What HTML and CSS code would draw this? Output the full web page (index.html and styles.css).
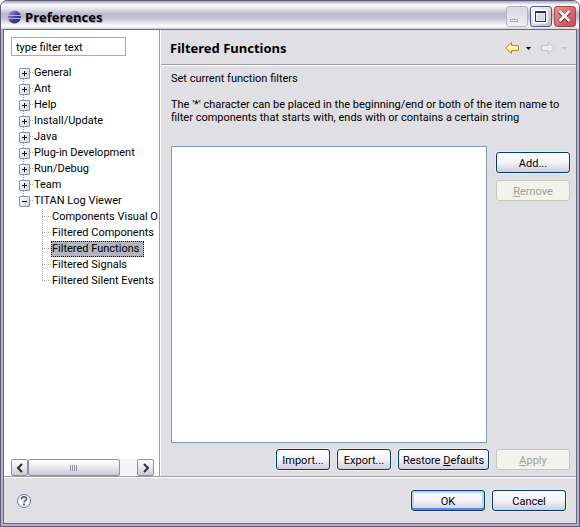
FILE: index.html
```html
<!DOCTYPE html>
<html lang="en">
<head>
<meta charset="utf-8">
<title>Preferences</title>
<link rel="stylesheet" href="styles.css">
</head>
<body>
<div class="window">
  <header class="titlebar">
    <svg class="app-icon" width="16" height="16" viewBox="0 0 16 16" aria-hidden="true">
      <defs><linearGradient id="orb" x1="0" y1="0" x2="1" y2="1"><stop offset="0" stop-color="#c8a4dc"/><stop offset=".5" stop-color="#4c449f"/><stop offset="1" stop-color="#25206c"/></linearGradient></defs>
      <circle cx="6.500" cy="8" r="6" fill="#e4a8d0"/>
      <circle cx="8.500" cy="8" r="6.500" fill="url(#orb)"/>
      <path d="M1 6.500h14M1 9.500h14" stroke="#b4b4e8" stroke-width="1"/>
    </svg>
    <h1 class="window-title">Preferences</h1>
    <div class="window-controls">
      <button class="wc wc-min" aria-label="Minimize"><svg width="21" height="21" viewBox="0 0 21 21"><rect x="4.500" y="13.500" width="7" height="2" fill="#fff" stroke="#aaa8b8"/></svg></button>
      <button class="wc wc-max" aria-label="Maximize"><svg width="21" height="21" viewBox="0 0 21 21"><path d="M5 5h11v11H5z" fill="none" stroke="#fff" stroke-width="3"/><path d="M5.500 6v9.500h10V6" fill="none" stroke="#30344c"/><path d="M5 6h11" stroke="#30344c" stroke-width="2"/></svg></button>
      <button class="wc wc-close" aria-label="Close"><svg width="21" height="21" viewBox="0 0 21 21"><path d="M5.500 5.500l10 10M15.500 5.500l-10 10" stroke="#802830" stroke-width="4"/><path d="M5.500 5l10 10M15.500 5l-10 10" stroke="#fff" stroke-width="2.500"/></svg></button>
    </div>
  </header>
  <div class="client">
    <main class="panes">
      <nav class="sidebar" aria-label="Preference pages">
        <input class="filter" type="text" value="type filter text" aria-label="Filter text">
        <ul class="tree">
          <li><span class="node">General</span></li>
          <li><span class="node">Ant</span></li>
          <li><span class="node">Help</span></li>
          <li><span class="node">Install/Update</span></li>
          <li><span class="node">Java</span></li>
          <li><span class="node">Plug-in Development</span></li>
          <li><span class="node">Run/Debug</span></li>
          <li><span class="node">Team</span></li>
          <li><span class="node open">TITAN Log Viewer</span>
            <ul class="subtree">
              <li><span class="leaf">Components Visual O</span></li>
              <li><span class="leaf">Filtered Components</span></li>
              <li><span class="leaf selected">Filtered Functions</span></li>
              <li><span class="leaf">Filtered Signals</span></li>
              <li><span class="leaf">Filtered Silent Events</span></li>
            </ul>
          </li>
        </ul>
        <div class="scrollbar">
          <button class="sb-button" aria-label="Scroll left"><svg width="14" height="14" viewBox="0 0 14 14"><path d="M9 3L5 7l4 4" fill="none" stroke="#303030" stroke-width="2"/></svg></button>
          <div class="sb-track"><div class="sb-thumb"><span class="grip"></span></div></div>
          <button class="sb-button" aria-label="Scroll right"><svg width="14" height="14" viewBox="0 0 14 14"><path d="M5 3l4 4-4 4" fill="none" stroke="#303030" stroke-width="2"/></svg></button>
        </div>
      </nav>
      <section class="page">
        <div class="page-header">
          <h2 class="page-title">Filtered Functions</h2>
          <div class="history">
            <button class="nav-button" aria-label="Back"><svg width="16" height="14" viewBox="0 0 16 14"><path d="M1.500 7L7.500 1.500V4.500H14.500V9.500H7.500V12.500Z" fill="#fff0a8" stroke="#c08820"/></svg></button>
            <button class="nav-button" aria-label="Back history"><svg width="5" height="3" viewBox="0 0 5 3"><path d="M0 0h5L2.500 3z" fill="#000"/></svg></button>
            <button class="nav-button forward" aria-label="Forward" disabled><svg width="16" height="14" viewBox="0 0 16 14"><path d="M14.500 7L8.500 1.500V4.500H1.500V9.500H8.500V12.500Z" fill="#eeeeee" stroke="#c4c4c4"/></svg></button>
            <button class="nav-button" aria-label="Forward history" disabled><svg width="5" height="3" viewBox="0 0 5 3"><path d="M0 0h5L2.500 3z" fill="#c4c4bc"/></svg></button>
          </div>
        </div>
        <div class="page-body">
          <p class="intro">Set current function filters</p>
          <p class="hint">The '*' character can be placed in the beginning/end or both of the item name to<br>filter components that starts with, ends with or contains a certain string</p>
          <div class="filters">
            <div class="list" role="listbox" aria-label="Function filters"></div>
            <div class="list-actions">
              <button class="button">Add...</button>
              <button class="button" disabled><u>R</u>emove</button>
            </div>
          </div>
          <div class="page-actions">
            <button class="button small">Import...</button>
            <button class="button small">Export...</button>
            <button class="button wide">Restore <u>D</u>efaults</button>
            <button class="button" disabled><u>A</u>pply</button>
          </div>
        </div>
      </section>
    </main>
    <footer class="footer">
      <button class="help" aria-label="Help"><svg width="16" height="16" viewBox="0 0 16 16"><circle cx="8" cy="8" r="6.500" fill="#f6f8fc" stroke="#62789c"/><path d="M5.500 6.500c0-3.500 5-3.500 5-.500 0 1.700-2.500 1.600-2.500 3.500M8 10.500v2" fill="none" stroke="#40587f" stroke-width="1.600"/></svg></button>
      <button class="button default">OK</button>
      <button class="button">Cancel</button>
    </footer>
  </div>
</div>
</body>
</html>
```
FILE: styles.css
```css
* { box-sizing: border-box; }
body {
  margin: 0;
  background: #fff;
  color: #000;
  font: 11px/13px Roboto, Tahoma, sans-serif;
}
button, input { font: inherit; color: inherit; }
h1, h2, p, ul { margin: 0; padding: 0; }
ul { list-style: none; }
svg { display: block; }

.window {
  display: flex;
  flex-direction: column;
  min-height: 100vh;
  padding: 0 2px 2px;
  border: 1px solid #5c5a78;
  border-radius: 7px 7px 0 0;
  background: #b4b2c8;
}
.titlebar {
  display: flex;
  align-items: center;
  gap: 3px;
  height: 28px;
  margin: 0 -2px;
  padding: 3px 3px 0 5px;
  border-radius: 6px 6px 0 0;
  background: linear-gradient(#a5a3b8, #fff 4px, #e4e3ec 8px, #bbb9cc 13px, #c2c0d2 17px, #fff 25px, #d0cfdc);
}
.window-title {
  flex: 1;
  font: bold 13px/18px "Open Sans", sans-serif;
  text-shadow: 1px 1px #a9a8b8;
}
.window-controls { display: flex; gap: 2px; }
.wc {
  width: 22px;
  height: 21px;
  padding: 0;
  border: 1px solid #565a80;
  border-radius: 3px;
  background: linear-gradient(135deg, #fff, #b8b7cc);
}
.wc svg { margin: -1px; }
.wc-min { border-color: #b4b3c6; background: linear-gradient(#d8d7e2, #eeedf4); }
.wc-close { border-color: #a34850; background: linear-gradient(135deg, #e89090, #c84850); }

.client {
  flex: 1;
  display: flex;
  flex-direction: column;
  border: 1px solid #6a6888;
  background: #e0dfe3;
}
.panes { flex: 1; display: flex; border-bottom: 1px solid #9d9da1; }

.sidebar {
  display: flex;
  flex-direction: column;
  flex: 0 0 156px;
  min-width: 0;
  padding: 7px 0 0 7px;
  border-right: 1px solid #9d9da1;
  background: #fff;
}
.filter {
  width: 115px;
  height: 19px;
  padding: 1px 4px 0;
  border: 1px solid #a5acb2;
  border-radius: 0;
  background: #fff;
}
.tree { flex: 1; padding: 9px 0 0 8px; overflow: hidden; }
.tree li { line-height: 16px; white-space: nowrap; }
.node { display: block; position: relative; padding-left: 15px; }
.node::before {
  content: "";
  position: absolute;
  left: 0;
  top: 3px;
  width: 9px;
  height: 9px;
  border: 1px solid #7898b5;
  border-radius: 1px;
  background:
    linear-gradient(#000, #000) center / 5px 1px no-repeat,
    linear-gradient(#000, #000) center / 1px 5px no-repeat,
    linear-gradient(135deg, #fff, #d2d0dc);
}
.node.open::before {
  background:
    linear-gradient(#000, #000) center / 5px 1px no-repeat,
    linear-gradient(135deg, #fff, #d2d0dc);
}
.node::after {
  content: "";
  position: absolute;
  left: 10px;
  top: 7px;
  width: 4px;
  border-top: 1px dotted #a5a294;
}
.tree > li { background: repeating-linear-gradient(#a5a294 0 1px, transparent 1px 2px) 4px 0 / 1px 100% no-repeat; }
.tree > li:first-child { background-position: 4px 8px; }
.tree > li:last-child { background-size: 1px 8px; }
.subtree { padding-left: 23px; }
.subtree li {
  background:
    repeating-linear-gradient(#aca899 0 1px, transparent 1px 2px) 0 0 / 1px 100% no-repeat,
    repeating-linear-gradient(90deg, #aca899 0 1px, transparent 1px 2px) 0 7px / 9px 1px no-repeat;
  padding-left: 9px;
}
.subtree li:last-child { background-size: 1px 8px, 9px 1px; }
.leaf { display: inline-block; height: 16px; padding: 0 1px; vertical-align: top; }
.selected { padding-right: 5px; outline: 1px dotted #000; outline-offset: -1px; background: #b2b4bf; }

.scrollbar { display: flex; height: 17px; margin-right: 5px; background: #f4f3f8; }
.sb-button, .sb-thumb {
  border: 1px solid #9290a4;
  border-radius: 2px;
  background: linear-gradient(#fff, #e8e7ee 50%, #cccad8);
}
.sb-button { width: 17px; padding: 0; display: grid; place-items: center; }
.sb-track { flex: 1; }
.sb-thumb { width: 84%; height: 17px; display: grid; place-items: center; }
.grip { width: 7px; height: 6px; background: repeating-linear-gradient(90deg, #9290a4 0 1px, transparent 1px 2px); }

.page { flex: 1; min-width: 0; display: flex; flex-direction: column; border-left: 1px solid #fff; }
.page-header {
  display: flex;
  align-items: center;
  height: 35px;
  padding: 2px 9px 0;
  border-bottom: 1px solid #9d9da1;
  box-shadow: 0 1px #fff;
}
.page-title { flex: 1; font: bold 13px/16px "Noto Sans", sans-serif; }
.history { display: flex; align-items: center; gap: 6px; }
.nav-button { padding: 0; border: 0; background: none; }
.forward { margin-left: 3px; }
.page-body { flex: 1; display: flex; flex-direction: column; padding: 7px 6px 6px 10px; }
.hint { margin-top: 13px; white-space: nowrap; }
.filters { flex: 1; display: flex; gap: 9px; margin-top: 22px; }
.list { flex: 1; border: 1px solid #7f9db9; background: #fff; }
.list-actions { display: flex; flex-direction: column; gap: 7px; padding-top: 6px; }
.page-actions { display: flex; justify-content: flex-end; gap: 7px; margin-top: 6px; }

.button {
  width: 74px;
  height: 21px;
  padding: 1px 0 0;
  border: 1px solid #003c74;
  border-radius: 3px;
  background: linear-gradient(#fff, #f4f3fa 50%, #cfcde0);
  box-shadow: 0 0 0 1px #edebe8;
  white-space: nowrap;
}
.small { width: 54px; }
.wide { width: 91px; }
.button:disabled { border-color: #c9c7ba; background: #f2f2ee; color: #a1a192; box-shadow: none; }
.default { box-shadow: 0 0 0 1px #edebe8, inset 0 -2px #6982ee, inset 0 0 0 2px #bcd4f6; }

.footer {
  display: flex;
  align-items: center;
  gap: 7px;
  height: 46px;
  padding: 0 10px 0 12px;
  border-top: 1px solid #fff;
}
.help { margin-right: auto; padding: 0; border: 0; background: none; }
```
